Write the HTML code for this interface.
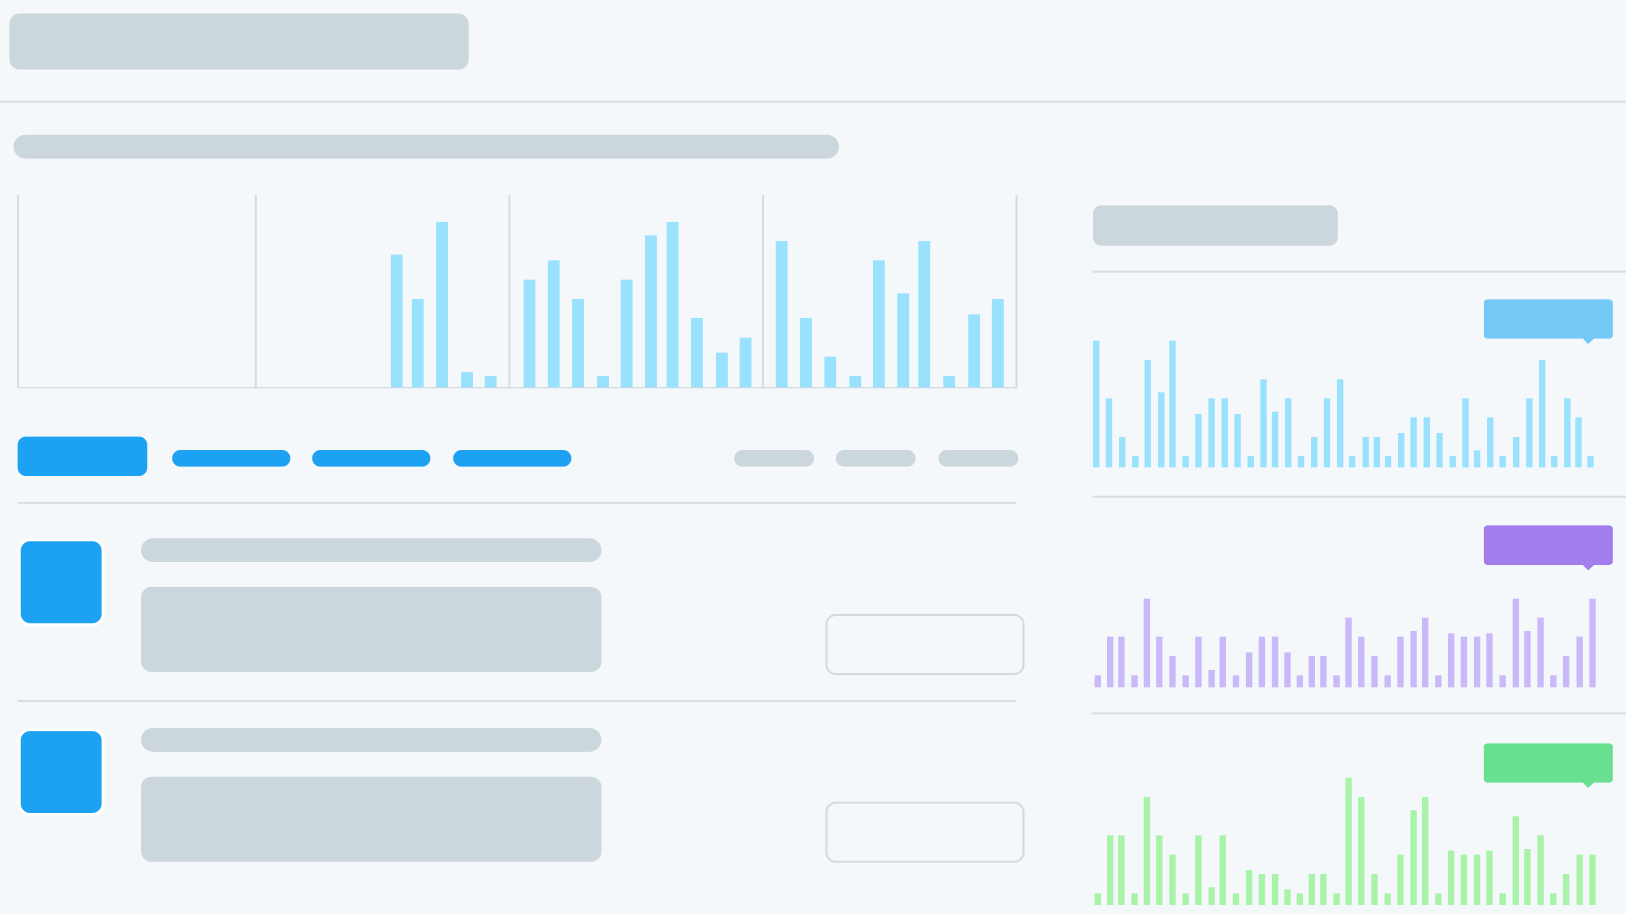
<!DOCTYPE html>
<html><head><meta charset="utf-8"><style>
html,body{margin:0;padding:0;width:1626px;height:914px;overflow:hidden;background:#f5f8fa;font-family:"Liberation Sans",sans-serif}
#s{position:absolute;left:0;top:0;width:1568px;height:881px;transform:scale(1.03699);transform-origin:0 0}
.a{position:absolute}
.g{background:#ccd6dd}
.b{background:#1da1f2}
.l{position:absolute;height:2px;background:#d8dfe4}
.av{position:absolute;background:#1da1f2;border:3px solid #fff;border-radius:12px;box-sizing:border-box}
.btn{position:absolute;border:2px solid #d3dbe0;border-radius:10px;box-sizing:border-box}
svg{position:absolute}
</style></head><body>
<div id="s">
<div class="a g" style="left:9px;top:13px;width:443px;height:54px;border-radius:10px"></div>
<div class="l" style="left:0;top:97px;width:1568px"></div>
<div class="a g" style="left:13px;top:130px;width:796px;height:23px;border-radius:12px"></div>

<div class="a b" style="left:17px;top:421px;width:125px;height:38px;border-radius:8px"></div>
<div class="a b" style="left:166px;top:434px;width:114px;height:16px;border-radius:8px"></div>
<div class="a b" style="left:301px;top:434px;width:114px;height:16px;border-radius:8px"></div>
<div class="a b" style="left:437px;top:434px;width:114px;height:16px;border-radius:8px"></div>
<div class="a g" style="left:708px;top:434px;width:77px;height:16px;border-radius:8px"></div>
<div class="a g" style="left:806px;top:434px;width:77px;height:16px;border-radius:8px"></div>
<div class="a g" style="left:905px;top:434px;width:77px;height:16px;border-radius:8px"></div>
<div class="l" style="left:17px;top:484px;width:963px"></div>

<div class="av" style="left:17px;top:519px;width:84px;height:85px"></div>
<div class="a g" style="left:136px;top:519px;width:444px;height:23px;border-radius:12px"></div>
<div class="a g" style="left:136px;top:566px;width:444px;height:82px;border-radius:10px"></div>
<div class="btn" style="left:796px;top:592px;width:192px;height:59px"></div>
<div class="l" style="left:17px;top:675px;width:963px"></div>

<div class="av" style="left:17px;top:702px;width:84px;height:85px"></div>
<div class="a g" style="left:136px;top:702px;width:444px;height:23px;border-radius:12px"></div>
<div class="a g" style="left:136px;top:749px;width:444px;height:82px;border-radius:10px"></div>
<div class="btn" style="left:796px;top:773px;width:192px;height:59px"></div>

<div class="a g" style="left:1054px;top:198px;width:236px;height:39px;border-radius:8px"></div>
<div class="l" style="left:1053px;top:261px;width:515px"></div>
<div class="l" style="left:1053px;top:478px;width:515px"></div>
<div class="l" style="left:1053px;top:687px;width:515px"></div>
</div>

<svg style="left:0;top:180px" width="1030" height="320" viewBox="0 0 1568 960" preserveAspectRatio="none">
<g fill="#d3dbe0"><rect x="26" y="45" width="3" height="580"/><rect x="388" y="45" width="3" height="580"/><rect x="774" y="45" width="3" height="580"/><rect x="1160" y="45" width="3" height="580"/><rect x="1546" y="45" width="3" height="580"/><rect x="26" y="621" width="1523" height="4"/></g>
<g fill="#99e1fd" id="lb"></g>
</svg>
<svg style="left:1000px;top:180px" width="626" height="320" viewBox="0 0 1568 960" preserveAspectRatio="none">
<path d="M1222 358H1525a10 10 0 0 1 10 10V466a10 10 0 0 1-10 10H1488L1473 492 1460 476H1222a10 10 0 0 1-10-10V368a10 10 0 0 1 10-10Z" fill="#74c9f6"/>
<g fill="#99e1fd" id="r1"></g>
</svg>
<svg style="left:1000px;top:500px" width="626" height="200" viewBox="0 0 1568 600" preserveAspectRatio="none">
<path d="M1222 76H1525a10 10 0 0 1 10 10V185a10 10 0 0 1-10 10H1488L1473 211 1460 195H1222a10 10 0 0 1-10-10V86a10 10 0 0 1 10-10Z" fill="#a47ded"/>
<g fill="#c9b9f9" id="r2"></g>
</svg>
<svg style="left:1000px;top:714px" width="626" height="200" viewBox="0 0 1568 600" preserveAspectRatio="none">
<path d="M1222 88H1525a10 10 0 0 1 10 10V196a10 10 0 0 1-10 10H1488L1473 222 1460 206H1222a10 10 0 0 1-10-10V98a10 10 0 0 1 10-10Z" fill="#69e090"/>
<g fill="#a8f3a8" id="r3"></g>
</svg>
<script>
function bars(id,xs,ts,bot,w){var g=document.getElementById(id),h='';for(var i=0;i<xs.length;i++){h+='<rect x="'+xs[i]+'" y="'+ts[i]+'" width="'+w+'" height="'+(bot-ts[i])+'"/>';}g.innerHTML=h;}
bars('lb',[595,627,664,702,738,797,834,871,909,945,982,1015,1052,1090,1126,1181,1218,1255,1293,1329,1366,1398,1436,1474,1510],[224,357,126,576,588,299,241,357,588,299,166,126,414,518,473,183,414,530,588,241,340,183,588,403,357],622,18);
bars('r1',[233,265,298,331,362,396,424,457,489,522,555,587,620,652,681,714,746,779,811,844,874,908,936,964,997,1028,1061,1093,1126,1158,1187,1220,1251,1285,1318,1350,1380,1413,1441,1471],[482,655,771,828,540,637,482,828,702,655,655,702,828,598,695,655,828,771,655,598,828,771,771,828,759,712,712,759,828,655,811,712,828,771,655,540,828,655,712,828],862,16);
var x2=[237,268,296,329,360,391,424,457,489,522,550,583,616,648,681,712,743,773,802,835,865,897,930,963,995,1028,1057,1090,1122,1154,1187,1218,1251,1284,1313,1346,1378,1410,1444,1476];
bars('r2',x2,[526,410,410,526,296,410,468,526,410,510,410,526,457,410,410,457,526,468,468,526,353,410,468,526,410,393,353,526,400,410,410,400,526,296,393,353,526,468,410,296],562,16);
bars('r3',x2,[538,364,364,538,249,364,422,538,364,520,364,538,468,480,480,526,538,480,480,538,191,249,480,538,422,289,249,538,410,422,422,410,538,307,405,364,538,480,422,422],573,16);
</script>
</body></html>
